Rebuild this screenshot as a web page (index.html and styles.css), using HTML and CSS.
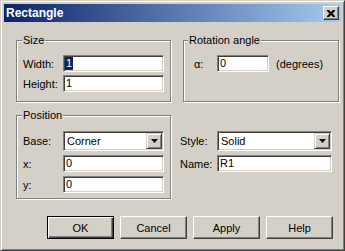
FILE: index.html
```html
<!DOCTYPE html>
<html>
<head>
<meta charset="utf-8">
<link rel="stylesheet" href="styles.css">
</head>
<body>
<div class="window">
  <div class="titlebar">
    <span class="title">Rectangle</span>
    <span class="close-btn"><svg width="8" height="7" viewBox="0 0 8 7"><path d="M0 0h2l2 2 2-2h2v1l-2.5 2.5 2.5 2.5v1h-2l-2-2-2 2h-2v-1l2.5-2.5-2.5-2.5z" fill="#000"/></svg></span>
  </div>
  <div class="body">
    <div class="grid">
      <div class="group">
        <div class="legend">Size</div>
        <div class="form-rows size-rows">
          <span class="lbl">Width:</span><div class="field"><span class="sel">1</span></div>
          <span class="lbl">Height:</span><div class="field">1</div>
        </div>
      </div>
      <div class="group rot-group">
        <div class="legend">Rotation angle</div>
        <div class="rot-row">
          <span class="alpha">α:</span>
          <div class="field short">0</div>
          <span class="unit">(degrees)</span>
        </div>
      </div>
      <div class="group">
        <div class="legend">Position</div>
        <div class="form-rows pos-rows">
          <span class="lbl">Base:</span>
          <div class="combo"><span class="combo-text">Corner</span><span class="drop"><svg width="7" height="4" viewBox="0 0 7 4"><path d="M0 0h7l-3.5 4z" fill="#000"/></svg></span></div>
          <span class="lbl">x:</span><div class="field">0</div>
          <span class="lbl">y:</span><div class="field">0</div>
        </div>
      </div>
      <div class="side">
        <div class="form-rows side-rows">
          <span class="lbl">Style:</span>
          <div class="combo"><span class="combo-text">Solid</span><span class="drop"><svg width="7" height="4" viewBox="0 0 7 4"><path d="M0 0h7l-3.5 4z" fill="#000"/></svg></span></div>
          <span class="lbl">Name:</span><div class="field">R1</div>
        </div>
      </div>
    </div>
    <div class="buttons">
      <div class="btn default">OK</div>
      <div class="btn">Cancel</div>
      <div class="btn">Apply</div>
      <div class="btn">Help</div>
    </div>
  </div>
</div>
</body>
</html>
```
FILE: styles.css
```css
html, body {
  margin: 0;
  padding: 0;
  background: #d4d0c8;
}
body {
  font-family: "Liberation Sans", Arial, sans-serif;
  font-size: 11px;
  color: #000;
}
.window {
  width: 345px;
  height: 251px;
  box-sizing: border-box;
  background: #d4d0c8;
  border: 1px solid;
  border-color: #d4d0c8 #404040 #404040 #d4d0c8;
  box-shadow: inset 1px 1px #fff, inset -1px -1px #808080;
  padding: 3px;
  display: flex;
  flex-direction: column;
}
.titlebar {
  height: 18px;
  flex: none;
  display: flex;
  align-items: center;
  justify-content: space-between;
  background: linear-gradient(90deg, #0a246a, #a6caf0);
  padding: 0 2px 0 2px;
}
.title {
  color: #fff;
  font-weight: bold;
  font-size: 12px;
}
.close-btn {
  width: 16px;
  height: 14px;
  box-sizing: border-box;
  background: #d4d0c8;
  border: 1px solid;
  border-color: #fff #404040 #404040 #fff;
  box-shadow: inset -1px -1px #808080;
  display: flex;
  align-items: center;
  justify-content: center;
}
.body {
  padding: 18px 2px 0 12px;
}
.grid {
  display: grid;
  grid-template-columns: 155px 156px;
  column-gap: 12px;
  row-gap: 13px;
}
.group {
  border: 1px solid #808080;
  box-shadow: inset 1px 1px #fff, 1px 1px #fff;
  padding: 0 6px;
}
.legend {
  width: fit-content;
  margin: -7px 0 0 -1px;
  padding: 0 1px;
  line-height: 13px;
  background: #d4d0c8;
}
.form-rows {
  display: grid;
  align-items: center;
}
.size-rows {
  grid-template-columns: 40px 101px;
  row-gap: 3px;
  margin-top: 8px;
  padding-bottom: 9px;
}
.field {
  height: 17px;
  box-sizing: border-box;
  background: #fff;
  border: 1px solid;
  border-color: #808080 #fff #fff #808080;
  box-shadow: inset 1px 1px #404040, inset -1px -1px #d4d0c8;
  padding: 0 0 0 2px;
  line-height: 15px;
  white-space: nowrap;
}
.sel {
  display: inline-block;
  background: #0a246a;
  color: #fff;
  line-height: 13px;
  padding: 0 1px;
  margin-left: -1px;
}
.rot-group {
  padding-left: 10px;
}
.rot-group .legend {
  margin-left: -6px;
}
.rot-row {
  display: flex;
  align-items: center;
  margin-top: 8px;
}
.alpha {
  width: 23px;
}
.field.short {
  width: 52px;
}
.unit {
  margin-left: 7px;
}
.pos-rows {
  grid-template-columns: 40px 101px;
  row-gap: 4px;
  margin-top: 9px;
  padding-bottom: 5px;
}
.combo {
  height: 20px;
  box-sizing: border-box;
  background: #fff;
  border: 1px solid;
  border-color: #808080 #fff #fff #808080;
  box-shadow: inset 1px 1px #404040, inset -1px -1px #d4d0c8;
  padding: 1px;
  display: flex;
  align-items: center;
  justify-content: space-between;
}
.combo-text {
  padding-left: 2px;
}
.drop {
  width: 16px;
  height: 16px;
  box-sizing: border-box;
  background: #d4d0c8;
  border: 1px solid;
  border-color: #d4d0c8 #404040 #404040 #d4d0c8;
  box-shadow: inset 1px 1px #fff, inset -1px -1px #808080;
  display: flex;
  align-items: center;
  justify-content: center;
}
.side {
  margin-left: -3px;
  padding-top: 16px;
}
.side-rows {
  grid-template-columns: 37px 115px;
  row-gap: 4px;
}
.buttons {
  display: flex;
  justify-content: flex-end;
  gap: 6px;
  margin-top: 17px;
  padding-right: 6px;
}
.btn {
  width: 67px;
  height: 23px;
  box-sizing: border-box;
  border: 1px solid;
  border-color: #fff #404040 #404040 #fff;
  box-shadow: inset -1px -1px #808080;
  display: flex;
  align-items: center;
  justify-content: center;
}
.btn.default {
  border-color: #000;
  box-shadow: inset 1px 1px #fff, inset -1px -1px #404040, inset -2px -2px #808080;
}
```
